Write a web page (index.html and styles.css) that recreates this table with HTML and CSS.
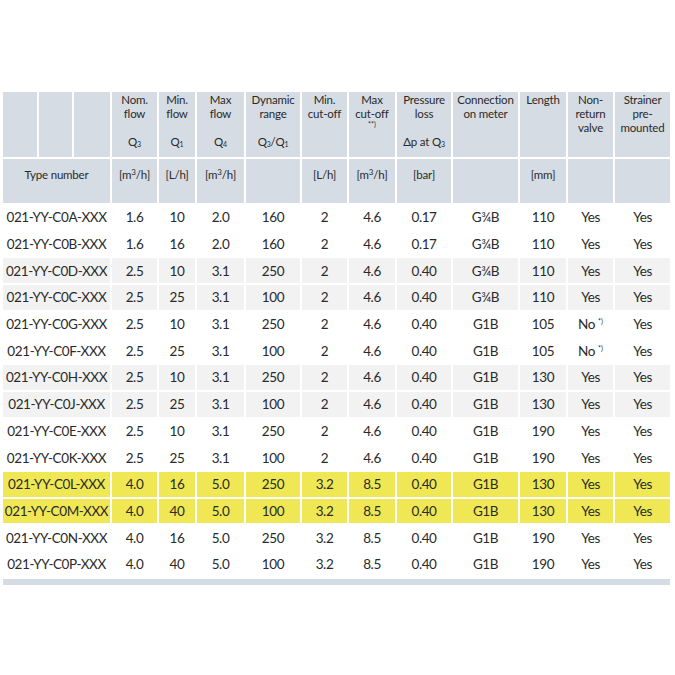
FILE: index.html
```html
<!DOCTYPE html>
<html>
<head>
<meta charset="utf-8">
<link rel="stylesheet" href="styles.css">
</head>
<body>
<table class="spec">
  <colgroup>
    <col class="w34"><col class="w33"><col class="w36"><col class="w45"><col class="w36"><col class="w47"><col class="w54"><col class="w45"><col class="w46"><col class="w54"><col class="w65"><col class="w46"><col class="w45"><col class="w55">
  </colgroup>
  <thead>
    <tr class="h1">
      <th></th><th></th><th></th>
      <th>Nom.<br>flow<br><br>Q<sub>3</sub></th>
      <th>Min.<br>flow<br><br>Q<sub>1</sub></th>
      <th>Max<br>flow<br><br>Q<sub>4</sub></th>
      <th>Dynamic<br>range<br><br>Q<sub>3</sub>/Q<sub>1</sub></th>
      <th>Min.<br>cut-off</th>
      <th>Max<br>cut-off<br><span class="note">**)</span></th>
      <th>Pressure<br>loss<br><br>Δp at Q<sub>3</sub></th>
      <th>Connection<br>on meter</th>
      <th>Length</th>
      <th>Non-<br>return<br>valve</th>
      <th>Strainer<br>pre-<br>mounted</th>
    </tr>
    <tr class="h2">
      <th colspan="3">Type number</th>
      <th>[m<sup>3</sup>/h]</th>
      <th>[L/h]</th>
      <th>[m<sup>3</sup>/h]</th>
      <th></th>
      <th>[L/h]</th>
      <th>[m<sup>3</sup>/h]</th>
      <th>[bar]</th>
      <th></th>
      <th>[mm]</th>
      <th></th>
      <th></th>
    </tr>
  </thead>
  <tbody>
    <tr><td colspan="3">021-YY-C0A-XXX</td><td>1.6</td><td>10</td><td>2.0</td><td>160</td><td>2</td><td>4.6</td><td>0.17</td><td>G¾B</td><td>110</td><td>Yes</td><td>Yes</td></tr>
    <tr><td colspan="3">021-YY-C0B-XXX</td><td>1.6</td><td>16</td><td>2.0</td><td>160</td><td>2</td><td>4.6</td><td>0.17</td><td>G¾B</td><td>110</td><td>Yes</td><td>Yes</td></tr>
    <tr class="grey"><td colspan="3">021-YY-C0D-XXX</td><td>2.5</td><td>10</td><td>3.1</td><td>250</td><td>2</td><td>4.6</td><td>0.40</td><td>G¾B</td><td>110</td><td>Yes</td><td>Yes</td></tr>
    <tr class="grey"><td colspan="3">021-YY-C0C-XXX</td><td>2.5</td><td>25</td><td>3.1</td><td>100</td><td>2</td><td>4.6</td><td>0.40</td><td>G¾B</td><td>110</td><td>Yes</td><td>Yes</td></tr>
    <tr><td colspan="3">021-YY-C0G-XXX</td><td>2.5</td><td>10</td><td>3.1</td><td>250</td><td>2</td><td>4.6</td><td>0.40</td><td>G1B</td><td>105</td><td>No <span class="note">*)</span></td><td>Yes</td></tr>
    <tr><td colspan="3">021-YY-C0F-XXX</td><td>2.5</td><td>25</td><td>3.1</td><td>100</td><td>2</td><td>4.6</td><td>0.40</td><td>G1B</td><td>105</td><td>No <span class="note">*)</span></td><td>Yes</td></tr>
    <tr class="grey"><td colspan="3">021-YY-C0H-XXX</td><td>2.5</td><td>10</td><td>3.1</td><td>250</td><td>2</td><td>4.6</td><td>0.40</td><td>G1B</td><td>130</td><td>Yes</td><td>Yes</td></tr>
    <tr class="grey"><td colspan="3">021-YY-C0J-XXX</td><td>2.5</td><td>25</td><td>3.1</td><td>100</td><td>2</td><td>4.6</td><td>0.40</td><td>G1B</td><td>130</td><td>Yes</td><td>Yes</td></tr>
    <tr><td colspan="3">021-YY-C0E-XXX</td><td>2.5</td><td>10</td><td>3.1</td><td>250</td><td>2</td><td>4.6</td><td>0.40</td><td>G1B</td><td>190</td><td>Yes</td><td>Yes</td></tr>
    <tr><td colspan="3">021-YY-C0K-XXX</td><td>2.5</td><td>25</td><td>3.1</td><td>100</td><td>2</td><td>4.6</td><td>0.40</td><td>G1B</td><td>190</td><td>Yes</td><td>Yes</td></tr>
    <tr class="yellow"><td colspan="3">021-YY-C0L-XXX</td><td>4.0</td><td>16</td><td>5.0</td><td>250</td><td>3.2</td><td>8.5</td><td>0.40</td><td>G1B</td><td>130</td><td>Yes</td><td>Yes</td></tr>
    <tr class="yellow"><td colspan="3">021-YY-C0M-XXX</td><td>4.0</td><td>40</td><td>5.0</td><td>100</td><td>3.2</td><td>8.5</td><td>0.40</td><td>G1B</td><td>130</td><td>Yes</td><td>Yes</td></tr>
    <tr><td colspan="3">021-YY-C0N-XXX</td><td>4.0</td><td>16</td><td>5.0</td><td>250</td><td>3.2</td><td>8.5</td><td>0.40</td><td>G1B</td><td>190</td><td>Yes</td><td>Yes</td></tr>
    <tr><td colspan="3">021-YY-C0P-XXX</td><td>4.0</td><td>40</td><td>5.0</td><td>100</td><td>3.2</td><td>8.5</td><td>0.40</td><td>G1B</td><td>190</td><td>Yes</td><td>Yes</td></tr>
    <tr class="foot"><td colspan="14"></td></tr>
  </tbody>
</table>
</body>
</html>
```

FILE: styles.css
```css
html, body {
  margin: 0;
  padding: 0;
  background: #ffffff;
}

body {
  font-family: Lato, "Open Sans", sans-serif;
  color: #2a2a2a;
}

.spec {
  margin: 90px 0 0 1px;
  width: 671px;
  table-layout: fixed;
  border-collapse: separate;
  border-spacing: 2px;
}

.w33 { width: 33px; }
.w34 { width: 34px; }
.w36 { width: 36px; }
.w45 { width: 45px; }
.w46 { width: 46px; }
.w47 { width: 47px; }
.w54 { width: 54px; }
.w55 { width: 55px; }
.w65 { width: 65px; }

.spec th {
  background: #d6dce4;
  font-weight: normal;
  font-size: 11.5px;
  letter-spacing: -0.2px;
  line-height: 14px;
  text-align: center;
  vertical-align: top;
  padding: 1px 0 0 0;
  white-space: nowrap;
}

.spec .h1 th {
  height: 64px;
}

.spec .h2 th {
  height: 44px;
  padding-top: 9px;
  box-sizing: border-box;
}

.spec sub {
  font-size: 7px;
  vertical-align: -1px;
  line-height: 0;
}

.spec sup {
  font-size: 8px;
  vertical-align: 4px;
  line-height: 0;
}

.spec .note {
  font-size: 7px;
  vertical-align: 5px;
  line-height: 0;
  letter-spacing: 0;
}

.spec td {
  height: 24.7px;
  padding: 0;
  font-size: 13.5px;
  letter-spacing: -0.4px;
  text-align: center;
  vertical-align: middle;
  white-space: nowrap;
  line-height: 16px;
}

.spec .grey td {
  background: #f2f2f2;
}

.spec .yellow td {
  background: #efe854;
}

.spec .foot td {
  height: 6px;
  background: #d6dce4;
}
```
